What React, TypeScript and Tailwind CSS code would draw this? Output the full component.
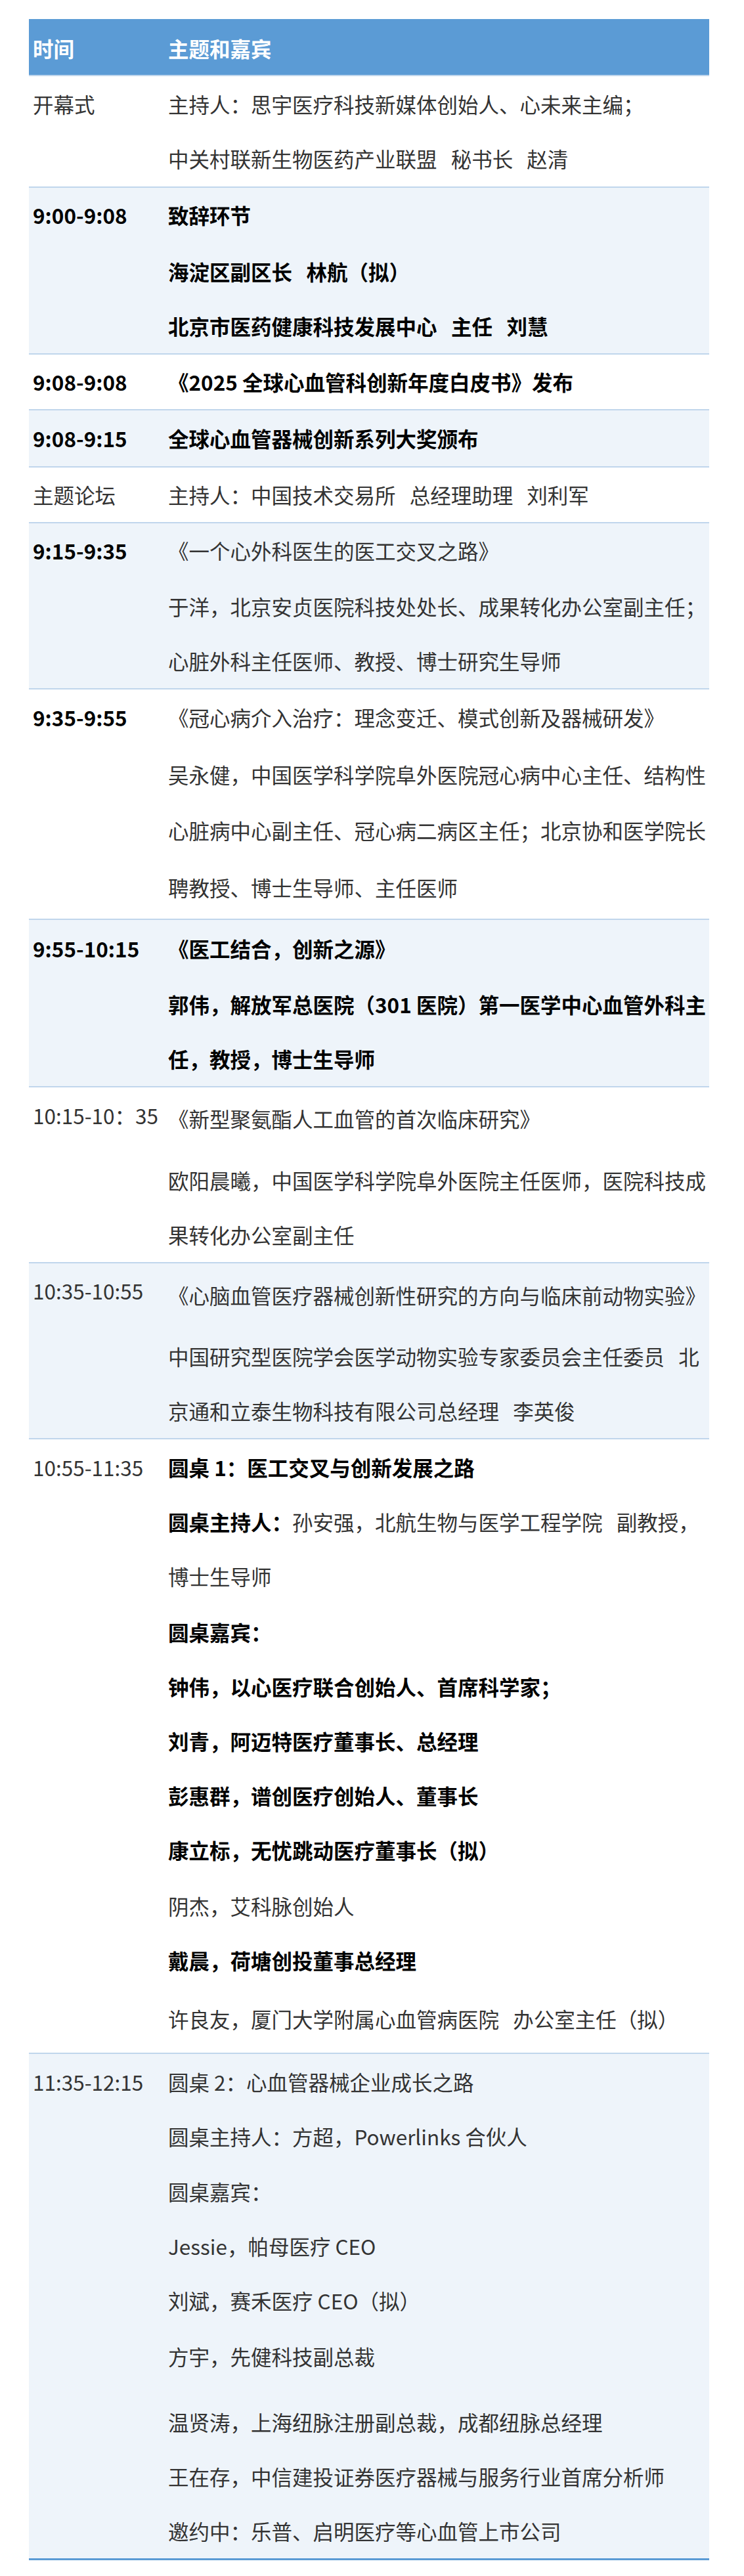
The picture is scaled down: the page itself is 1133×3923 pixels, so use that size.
import type { ReactNode } from "react"

interface Line {
  t: ReactNode
  b?: boolean
  m?: string
}

interface Row {
  time: string
  tb?: boolean
  tp: string
  pt: string
  pb?: string
  alt?: boolean
  lines: Line[]
}

const rows: Row[] = [
  {
    time: "开幕式",
    tp: "pt-[1px]",
    pt: "pt-[1px]",
    pb: "pb-[1px]",
    lines: [
      { t: "主持人：思宇医疗科技新媒体创始人、心未来主编；" },
      { t: "中关村联新生物医药产业联盟   秘书长   赵清" },
    ],
  },
  {
    time: "9:00-9:08",
    tb: true,
    alt: true,
    tp: "pt-0",
    pt: "pt-0",
    lines: [
      { t: "致辞环节", b: true },
      { t: "海淀区副区长   林航（拟）", b: true, m: "mt-[3px]" },
      { t: "北京市医药健康科技发展中心   主任   刘慧", b: true },
    ],
  },
  {
    time: "9:08-9:08",
    tb: true,
    tp: "pt-0",
    pt: "pt-0",
    lines: [{ t: "《2025 全球心血管科创新年度白皮书》发布", b: true }],
  },
  {
    time: "9:08-9:15",
    tb: true,
    alt: true,
    tp: "pt-[1px]",
    pt: "pt-[1px]",
    pb: "pb-[1px]",
    lines: [{ t: "全球心血管器械创新系列大奖颁布", b: true }],
  },
  {
    time: "主题论坛",
    tp: "pt-0",
    pt: "pt-0",
    lines: [{ t: "主持人：中国技术交易所   总经理助理   刘利军" }],
  },
  {
    time: "9:15-9:35",
    tb: true,
    alt: true,
    tp: "pt-0",
    pt: "pt-0",
    lines: [
      { t: "《一个心外科医生的医工交叉之路》" },
      { t: "于洋，北京安贞医院科技处处长、成果转化办公室副主任；", m: "mt-[2px]" },
      { t: "心脏外科主任医师、教授、博士研究生导师" },
    ],
  },
  {
    time: "9:35-9:55",
    tb: true,
    tp: "pt-[1px]",
    pt: "pt-[1px]",
    pb: "pb-[6px]",
    lines: [
      { t: "《冠心病介入治疗：理念变迁、模式创新及器械研发》" },
      { t: "吴永健，中国医学科学院阜外医院冠心病中心主任、结构性", m: "mt-[4px]" },
      { t: "心脏病中心副主任、冠心病二病区主任；北京协和医学院长", m: "mt-[2px]" },
      { t: "聘教授、博士生导师、主任医师", m: "mt-[4px]" },
    ],
  },
  {
    time: "9:55-10:15",
    tb: true,
    alt: true,
    tp: "pt-[2px]",
    pt: "pt-[2px]",
    lines: [
      { t: "《医工结合，创新之源》", b: true },
      { t: "郭伟，解放军总医院（301 医院）第一医学中心血管外科主", b: true, m: "mt-[2px]" },
      { t: "任，教授，博士生导师", b: true },
    ],
  },
  {
    time: "10:15-10：35",
    tp: "pt-[1px]",
    pt: "pt-[6px]",
    lines: [
      { t: "《新型聚氨酯人工血管的首次临床研究》" },
      { t: "欧阳晨曦，中国医学科学院阜外医院主任医师，医院科技成", m: "mt-[11px]" },
      { t: "果转化办公室副主任" },
    ],
  },
  {
    time: "10:35-10:55",
    alt: true,
    tp: "pt-0",
    pt: "pt-[7px]",
    lines: [
      { t: "《心脑血管医疗器械创新性研究的方向与临床前动物实验》" },
      { t: "中国研究型医院学会医学动物实验专家委员会主任委员   北", m: "mt-[10px]" },
      { t: "京通和立泰生物科技有限公司总经理   李英俊" },
    ],
  },
  {
    time: "10:55-11:35",
    tp: "pt-[1px]",
    pt: "pt-[1px]",
    pb: "pb-[10px]",
    lines: [
      { t: "圆桌 1：医工交叉与创新发展之路", b: true },
      {
        t: (
          <>
            <span className="font-semibold text-black">圆桌主持人：</span>孙安强，北航生物与医学工程学院   副教授，
          </>
        ),
      },
      { t: "博士生导师" },
      { t: "圆桌嘉宾：", b: true, m: "mt-[2px]" },
      { t: "钟伟，以心医疗联合创始人、首席科学家；", b: true },
      { t: "刘青，阿迈特医疗董事长、总经理", b: true },
      { t: "彭惠群，谱创医疗创始人、董事长", b: true },
      { t: "康立标，无忧跳动医疗董事长（拟）", b: true },
      { t: "阴杰，艾科脉创始人", m: "mt-[2px]" },
      { t: "戴晨，荷塘创投董事总经理", b: true },
      { t: "许良友，厦门大学附属心血管病医院   办公室主任（拟）", m: "mt-[6px]" },
    ],
  },
  {
    time: "11:35-12:15",
    alt: true,
    tp: "pt-[1px]",
    pt: "pt-[1px]",
    lines: [
      { t: "圆桌 2：心血管器械企业成长之路" },
      { t: "圆桌主持人：方超，Powerlinks 合伙人" },
      { t: "圆桌嘉宾：", m: "mt-[1px]" },
      { t: "Jessie，帕母医疗 CEO" },
      { t: "刘斌，赛禾医疗 CEO（拟）" },
      { t: "方宇，先健科技副总裁", m: "mt-[2px]" },
      { t: "温贤涛，上海纽脉注册副总裁，成都纽脉总经理", m: "mt-[17px]" },
      { t: "王在存，中信建投证券医疗器械与服务行业首席分析师" },
      { t: "邀约中：乐普、启明医疗等心血管上市公司" },
    ],
  },
]

function ScheduleRow({ row }: { row: Row }) {
  return (
    <div className={`flex border-t-2 border-[#c0d6ec] ${row.alt ? "bg-[#eef4fa]" : "bg-white"}`}>
      <div
        className={`w-[212px] shrink-0 pl-[6px] leading-[83px] whitespace-nowrap ${row.tp} ${
          row.tb ? "font-semibold text-black" : "text-[#333333]"
        }`}
      >
        {row.time}
      </div>
      <div className={`flex-1 ${row.pt} ${row.pb ?? ""}`}>
        {row.lines.map((line, i) => (
          <div
            key={i}
            className={`h-[83px] leading-[83px] whitespace-pre ${line.m ?? ""} ${
              line.b ? "font-semibold text-black" : "text-[#333333]"
            }`}
          >
            {line.t}
          </div>
        ))}
      </div>
    </div>
  )
}

export default function App() {
  return (
    <div className="min-h-[3923px] w-full bg-white pt-[29px] font-['Noto_Sans_CJK_SC','Noto_Sans',sans-serif] text-[31.5px]">
      <div className="ml-[44px] w-[1036px] border-b-[3px] border-[#5b9bd5]">
        {/* header */}
        <div className="flex h-[85px] items-center bg-[#5b9bd5] pt-[4px] font-bold text-white">
          <div className="w-[212px] shrink-0 pl-[6px]">时间</div>
          <div className="flex-1">主题和嘉宾</div>
        </div>

        {rows.map((row, i) => (
          <ScheduleRow key={i} row={row} />
        ))}
      </div>
    </div>
  )
}
